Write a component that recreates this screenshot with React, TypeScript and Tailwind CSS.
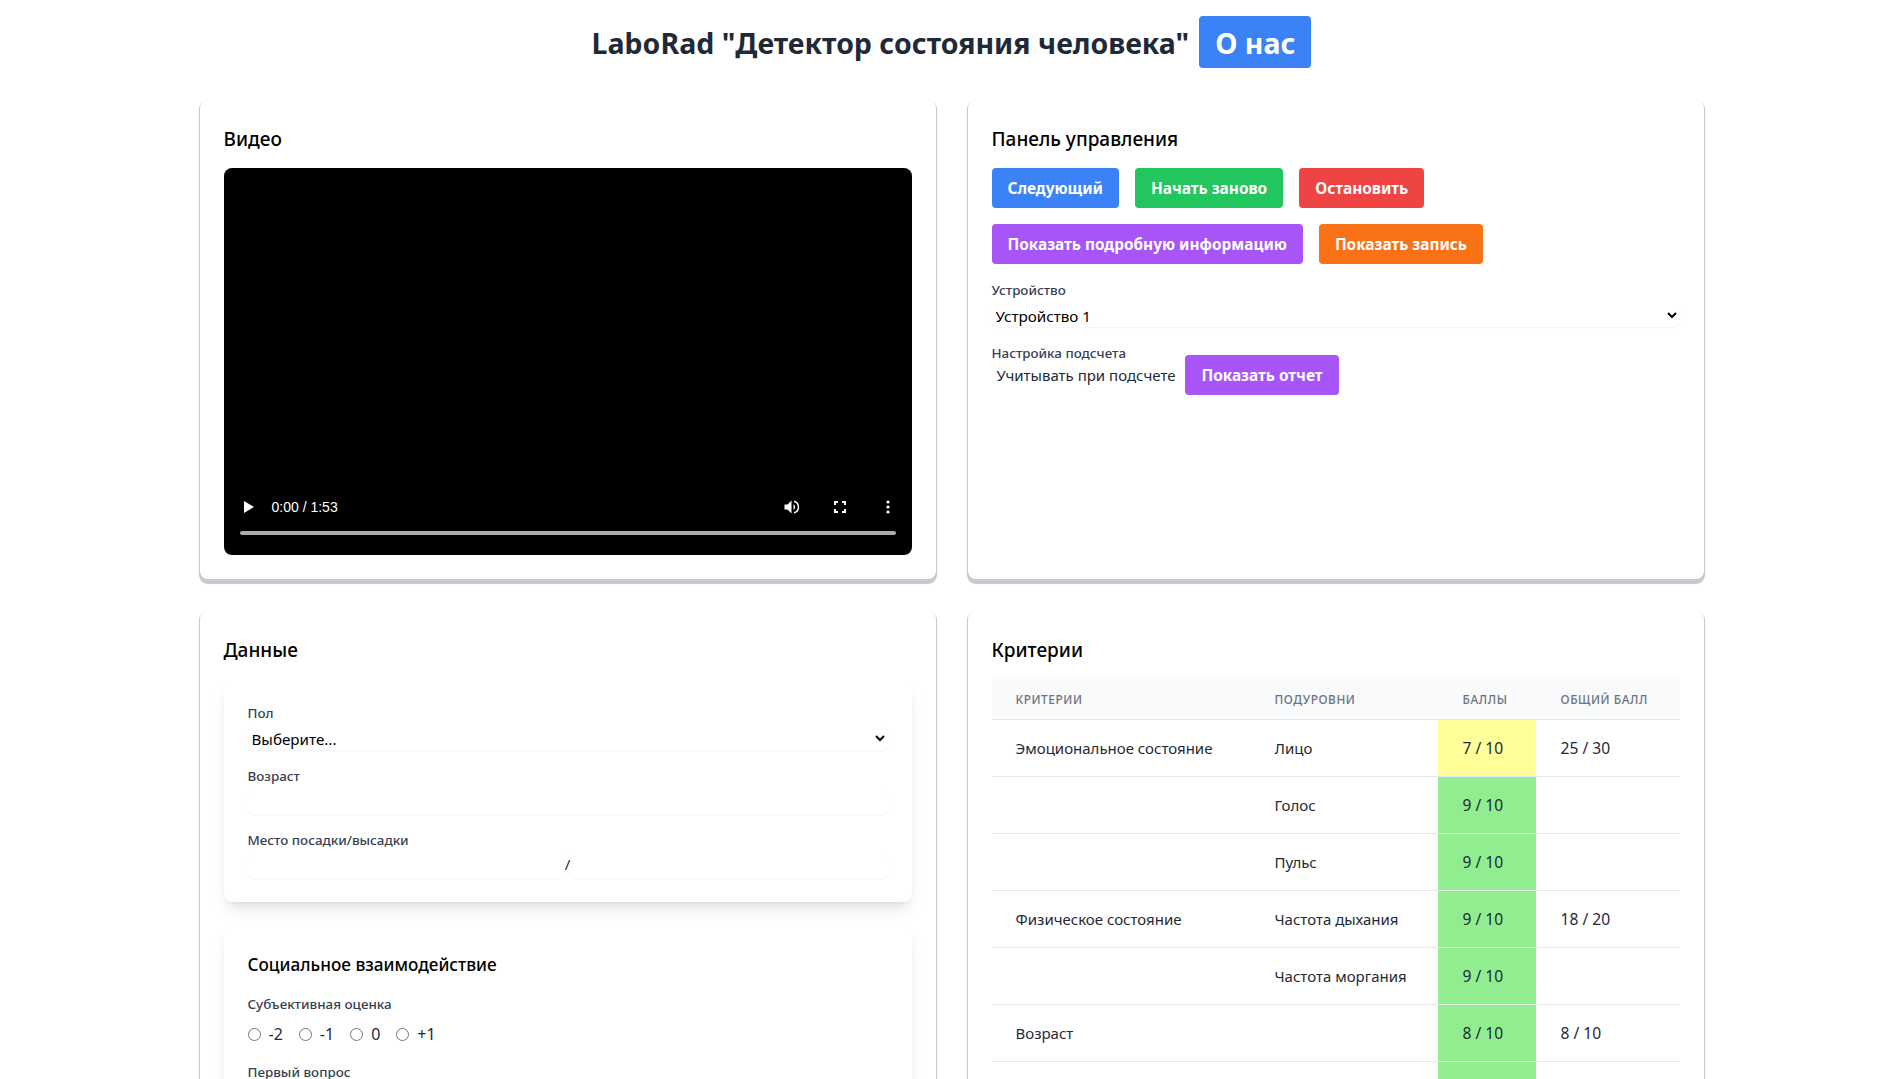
import React from "react";

function Btn({ className, children }: { className: string; children: React.ReactNode }) {
  return (
    <button className={`h-10 px-4 pt-px rounded text-[15.4px] font-bold text-white whitespace-nowrap ${className}`}>
      {children}
    </button>
  );
}

function Label({ children }: { children: React.ReactNode }) {
  return <label className="block text-[13.4px] leading-5 font-medium text-[#374151]">{children}</label>;
}

function Card({ title, children }: { title: string; children: React.ReactNode }) {
  return (
    <section className="bg-white rounded-lg p-6 shadow-[0_1px_0_1px_#c9cbd4,0_4px_1px_1px_#c4c7ce]">
      <h2 className="text-[19px] font-medium text-black mb-4 h-7 leading-[30px]">{title}</h2>
      {children}
    </section>
  );
}

const rows = [
  ["Эмоциональное состояние", "Лицо", "7 / 10", "25 / 30", "bg-[#ffff99]"],
  ["", "Голос", "9 / 10", "", "bg-[#90ee90]"],
  ["", "Пульс", "9 / 10", "", "bg-[#90ee90]"],
  ["Физическое состояние", "Частота дыхания", "9 / 10", "18 / 20", "bg-[#90ee90]"],
  ["", "Частота моргания", "9 / 10", "", "bg-[#90ee90]"],
  ["Возраст", "", "8 / 10", "8 / 10", "bg-[#90ee90]"],
  ["", "", "", "", "bg-[#90ee90]"],
];

function Field({ className = "" }: { className?: string }) {
  return (
    <input
      type="text"
      className={`h-6 mt-1 bg-white rounded-md shadow-[0_1px_2px_0_rgba(0,0,0,0.05)] outline-none min-w-0 ${className}`}
    />
  );
}

function Picker({ value }: { value: string }) {
  return (
    <select className="block w-full h-[23px] mt-1 mb-4 text-[15.2px] text-black bg-white rounded-md shadow-[0_1px_2px_0_rgba(0,0,0,0.05)] outline-none">
      <option>{value}</option>
    </select>
  );
}

export default function App() {
  return (
    <div className="h-screen overflow-hidden bg-white font-['Noto_Sans',sans-serif]">
      <div className="mx-auto max-w-[1536px] px-4 py-4">
        <h1 className="flex justify-center items-center gap-[10px] text-[28.5px] font-bold text-[#1f2937] mb-8 h-[52px]">
          <span className="pt-[2px]">LaboRad "Детектор состояния человека"</span>
          <button className="px-4 pt-[2px] h-[52px] rounded bg-[#3b82f6] text-white text-[28.5px] font-bold">О нас</button>
        </h1>

        <div className="grid grid-cols-2 gap-8">
          <Card title="Видео">
            <div className="h-[387px] bg-black rounded-lg flex flex-col justify-end px-4 pb-5 text-white">
              <div className="flex items-center h-6 mb-3 text-[14px]">
                <svg width="10" height="12" viewBox="0 0 10 12" className="ml-[4px]"><path d="M0 0l10 6-10 6z" fill="#fff" /></svg>
                <span className="ml-[18px] flex-1 font-['Liberation_Sans',sans-serif]">0:00 / 1:53</span>
                <svg width="18" height="18" viewBox="0 0 18 18" className="mr-[33px]">
                  <path d="M1.5 6.5h3l4-4v13l-4-4h-3z" fill="#fff" />
                  <path d="M10.5 6a3.6 3.6 0 0 1 0 6z" fill="#fff" />
                  <path d="M11 3.2a6 6 0 0 1 0 11.6" stroke="#fff" strokeWidth="1.5" fill="none" />
                </svg>
                <svg width="12" height="12" viewBox="0 0 12 12" className="mr-10">
                  <path d="M1 4V1h3M8 1h3v3M11 8v3H8M4 11H1V8" stroke="#fff" strokeWidth="2" fill="none" />
                </svg>
                <svg width="4" height="14" viewBox="0 0 4 14" className="mr-[6px]">
                  <circle cx="2" cy="2" r="1.6" fill="#fff" />
                  <circle cx="2" cy="7" r="1.6" fill="#fff" />
                  <circle cx="2" cy="12" r="1.6" fill="#fff" />
                </svg>
              </div>
              <div className="h-1 rounded-full bg-[#acacac]" />
            </div>
          </Card>

          <Card title="Панель управления">
            <div className="flex gap-4 mb-4">
              <Btn className="bg-[#3b82f6]">Следующий</Btn>
              <Btn className="bg-[#22c55e]">Начать заново</Btn>
              <Btn className="bg-[#ef4444]">Остановить</Btn>
            </div>
            <div className="flex gap-4 mb-4">
              <Btn className="bg-[#a855f7]">Показать подробную информацию</Btn>
              <Btn className="bg-[#f97316]">Показать запись</Btn>
            </div>
            <Label>Устройство</Label>
            <Picker value="Устройство 1" />
            <Label>Настройка подсчета</Label>
            <div className="flex items-center -mt-2">
              <span className="ml-[5px] mr-[10px] text-[15px] text-[#1f2937]">Учитывать при подсчете</span>
              <Btn className="bg-[#a855f7]">Показать отчет</Btn>
            </div>
          </Card>

          <Card title="Данные">
            <div className="bg-white rounded-lg p-6 shadow-lg mb-6">
              <Label>Пол</Label>
              <Picker value="Выберите..." />
              <Label>Возраст</Label>
              <Field className="block w-full mb-4" />
              <Label>Место посадки/высадки</Label>
              <div className="flex items-center">
                <Field className="flex-1" />
                <span className="text-[15px] text-[#1f2937] px-px">/</span>
                <Field className="flex-1" />
              </div>
            </div>
            <div className="bg-white rounded-lg p-6 shadow-lg">
              <h3 className="text-[17.2px] font-medium h-7 leading-[30px] text-black mb-4">Социальное взаимодействие</h3>
              <Label>Субъективная оценка</Label>
              <div className="flex items-center gap-4 text-[16px] text-[#1f2937] mt-2 mb-4 h-6">
                {["-2", "-1", "0", "+1"].map((v) => (
                  <label key={v} className="flex items-center gap-2">
                    <input type="radio" name="subj" />
                    <span>{v}</span>
                  </label>
                ))}
              </div>
              <Label>Первый вопрос</Label>
            </div>
          </Card>

          <Card title="Критерии">
            <table className="w-full table-fixed border-collapse text-[15px] text-[#1f2937]">
              <colgroup>
                <col className="w-[258px]" />
                <col className="w-[188px]" />
                <col className="w-[98px]" />
                <col className="w-[144px]" />
              </colgroup>
              <thead className="bg-[#f9fafb] border-b border-[#e5e7eb]">
                <tr>
                  {["Критерии", "Подуровни", "Баллы", "Общий балл"].map((h, i) => (
                    <th
                      key={h}
                      className={`py-3 pr-6 ${i === 0 ? "pl-6" : "pl-[25px]"} text-left text-[11.8px] leading-4 font-medium uppercase tracking-wider text-[#6b7280] whitespace-nowrap`}
                    >
                      {h}
                    </th>
                  ))}
                </tr>
              </thead>
              <tbody>
                {rows.map((r, i) => (
                  <tr key={i} className="border-b border-[#e5e7eb] h-[57px]">
                    <td className="pl-6 pr-6 py-4 leading-6 whitespace-nowrap">{r[0]}</td>
                    <td className="pl-[25px] pr-6 py-4 leading-6 whitespace-nowrap">{r[1]}</td>
                    <td className={`pl-[25px] pr-2 py-4 leading-6 text-[15.6px] whitespace-nowrap ${r[4]}`}>{r[2]}</td>
                    <td className="pl-[25px] pr-6 py-4 leading-6 text-[15.6px] whitespace-nowrap">{r[3]}</td>
                  </tr>
                ))}
              </tbody>
            </table>
          </Card>
        </div>
      </div>
    </div>
  );
}
